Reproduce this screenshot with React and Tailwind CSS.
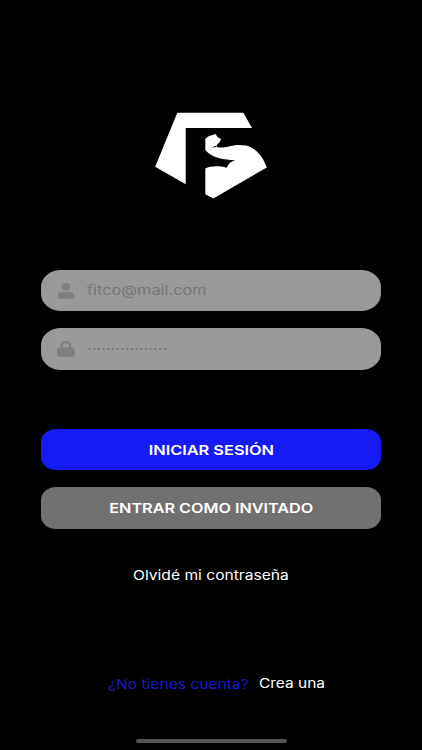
function Logo() {
  return (
    <svg className="block h-[88px] w-[114px]" viewBox="154 111 114 88" fill="#fff" aria-hidden="true">
      <path d="M177.3 112.7H243.4L252 128H185.7V184.3L155.2 166.8Z" />
      <path d="M205.3 138.8L208.6 136.2L215.5 134.1L217.3 136.8L221 139L220 141.8L216.5 145.2L217.6 147.2C221 148 225 147.3 228 146.7C234 145 240 144.5 246 145.6C256 148 263 156.5 266.8 167.4L213.3 198.6L205.3 194.3V168.5C210 166 219 165.6 226.7 167.7C228.4 163.8 231 161.2 235.4 160.3C224 159.8 212 158 205.3 150ZM212 147.6L217.4 147L215.2 145.7Z" fillRule="evenodd" />
    </svg>
  );
}

function UserIcon() {
  return (
    <svg className="h-[17px] w-[18px] shrink-0" viewBox="0 0 18 17" fill="#7f7f7f" aria-hidden="true">
      <ellipse cx="8.8" cy="4.7" rx="4.5" ry="4" />
      <path d="M5 9.9H12.6C15.5 9.9 17.1 11.5 17.1 13.8V15Q17.1 16.7 15.3 16.7H2.3Q.5 16.7.5 15V13.8C.5 11.5 2.1 9.9 5 9.9Z" />
    </svg>
  );
}

function LockIcon() {
  return (
    <svg className="h-[17px] w-[18px] shrink-0" viewBox="0 0 18 17" aria-hidden="true">
      <path d="M4.6 9V6C4.6 3.6 6.4 2.1 8.9 2.1S13.2 3.6 13.2 6V9" fill="none" stroke="#7f7f7f" strokeWidth="2.4" />
      <rect x="0" y="7.6" width="17.8" height="9.1" rx="2.2" fill="#7f7f7f" />
    </svg>
  );
}

export default function App() {
  return (
    <main className="flex h-[750px] w-[422px] flex-col items-center overflow-hidden bg-black pt-[111px] font-['Inter','Liberation_Sans',sans-serif] text-white">
      <Logo />
      <form className="mt-[70.5px] flex w-[340px] flex-col">
        <div className="flex h-[41.5px] items-center rounded-[20px/17px] bg-[#999] pl-[16px]">
          <UserIcon />
          <span className="ml-[12px] origin-left scale-x-[1.22] whitespace-nowrap text-[13.4px] leading-5 text-[#757575]">fitco@mail.com</span>
        </div>
        <div className="mt-[17px] flex h-[41.5px] items-center rounded-[20px/17px] bg-[#999] pl-[16px]">
          <LockIcon />
          <span className="ml-[12px] origin-left scale-x-[1.17] whitespace-nowrap pt-px text-[14px] leading-5 text-[#686868]">·················</span>
        </div>
        <button type="button" className="mt-[59px] flex h-[41.5px] items-center justify-center rounded-[15px/13px] bg-[#161af5]">
          <span className="scale-x-[1.22] whitespace-nowrap pt-px text-[13.4px] font-semibold leading-5">INICIAR SESIÓN</span>
        </button>
        <button type="button" className="mt-[17px] flex h-[41.5px] items-center justify-center rounded-[15px/13px] bg-[#717171]">
          <span className="scale-x-[1.21] whitespace-nowrap pt-px text-[13.4px] font-semibold leading-5">ENTRAR COMO INVITADO</span>
        </button>
      </form>
      <a className="mt-[36px] scale-x-[1.2] whitespace-nowrap text-[13px] leading-5">Olvidé mi contraseña</a>
      <div className="mt-[88px] flex w-full pl-[108px] text-[13px] leading-5">
        <span className="w-[151px] whitespace-nowrap pt-px text-[#181bc9]"><span className="inline-block origin-left scale-x-[1.2]">¿No tienes cuenta?</span></span>
        <a className="origin-left scale-x-[1.19] whitespace-nowrap">Crea una</a>
      </div>
      <div className="mt-[45px] h-[4px] w-[151px] rounded-full bg-[#555]" />
    </main>
  );
}
